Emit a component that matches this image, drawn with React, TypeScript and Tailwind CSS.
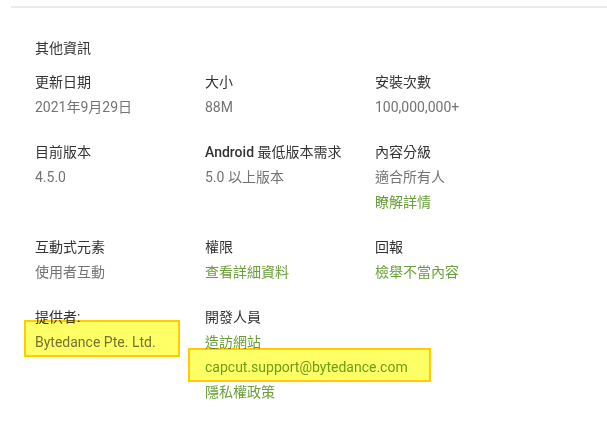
import React from "react";

interface Info {
  label: React.ReactNode;
  key: string;
  values: { text: string; link?: boolean }[];
}

const rows: Info[][] = [
  [
    { key: "updated", label: "更新日期", values: [{ text: "2021年9月29日" }] },
    { key: "size", label: "大小", values: [{ text: "88M" }] },
    { key: "installs", label: "安裝次數", values: [{ text: "100,000,000+" }] },
  ],
  [
    { key: "version", label: "目前版本", values: [{ text: "4.5.0" }] },
    {
      key: "android",
      label: (
        <>
          <span className="font-medium">Android</span> 最低版本需求
        </>
      ),
      values: [{ text: "5.0 以上版本" }],
    },
    { key: "rating", label: "內容分級", values: [{ text: "適合所有人" }, { text: "瞭解詳情", link: true }] },
  ],
  [
    { key: "interactive", label: "互動式元素", values: [{ text: "使用者互動" }] },
    { key: "perm", label: "權限", values: [{ text: "查看詳細資料", link: true }] },
    { key: "report", label: "回報", values: [{ text: "檢舉不當內容", link: true }] },
  ],
  [
    { key: "offered", label: "提供者:", values: [{ text: "Bytedance Pte. Ltd." }] },
    {
      key: "dev",
      label: "開發人員",
      values: [
        { text: "造訪網站", link: true },
        { text: "capcut.support@bytedance.com", link: true },
        { text: "隱私權政策", link: true },
      ],
    },
  ],
];

export default function App() {
  return (
    <div
      className="relative w-[607px] h-[430px] bg-white overflow-hidden text-[14px]"
      style={{ fontFamily: "Roboto, 'Noto Sans CJK TC', sans-serif" }}
    >
      <div className="ml-[11px] mt-[6px] border-t-2 border-[#ebebeb]" />
      <div className="pl-[35px] pt-[28px]">
        <h2 className="leading-[25px] text-[#333333] mb-[9px]">其他資訊</h2>
        <div className="flex flex-col gap-[20px]">
          {rows.map((row, i) => (
            <div key={i} className="grid grid-cols-[170px_170px_170px]">
              {row.map((cell) => (
                <div key={cell.key} className="flex flex-col">
                  <div className="leading-[25px] text-[#333333]">{cell.label}</div>
                  {cell.values.map((v) => (
                    <div
                      key={v.text}
                      className={
                        v.link
                          ? "leading-[25px] text-[#689f38]"
                          : "leading-[25px] text-[#737373]"
                      }
                    >
                      {v.text}
                    </div>
                  ))}
                </div>
              ))}
            </div>
          ))}
        </div>
      </div>

      {/* highlight marks */}
      <div className="absolute left-[24px] top-[320px] w-[156px] h-[37px] bg-[#ffff66] border-2 border-[#ffcc00] mix-blend-multiply" />
      <div className="absolute left-[188px] top-[348px] w-[243px] h-[34px] bg-[#ffff66] border-2 border-[#ffcc00] mix-blend-multiply" />
    </div>
  );
}
